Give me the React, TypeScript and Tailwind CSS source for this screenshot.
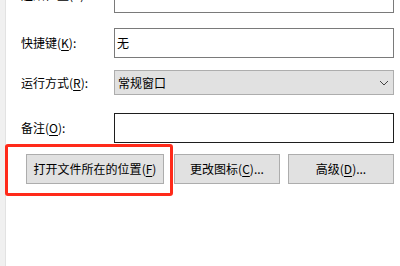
import React from "react";

const Key: React.FC<{ k: string }> = ({ k }) => (
  <>
    (<span className="underline underline-offset-2">{k}</span>)
  </>
);

const rowLabel = "w-[93px] shrink-0 text-[12px] leading-none";

const App: React.FC = () => {
  return (
    <div className="relative flex h-[266px] w-[400px] overflow-hidden bg-white font-['Noto_Sans_CJK_SC','Microsoft_YaHei',sans-serif] text-black">
      {/* left window edge */}
      <div className="h-full w-[6px] shrink-0 border-r border-[#e2e2e2] bg-[#f0f0f0]" />

      <div className="flex flex-1 flex-col pl-[15px]">
        {/* 起始位置 row, mostly cut off at the top */}
        <div className="mt-[-17px] flex items-center">
          <div className={rowLabel + " mb-[6px]"}>起始位置(S):</div>
          <div className="h-[30px] w-[280px] border border-[#7a7a7a] bg-white" />
        </div>

        {/* 快捷键 */}
        <div className="mt-[15px] flex items-center">
          <div className={rowLabel}>
            快捷键<Key k="K" />:
          </div>
          <div className="flex h-[30px] w-[280px] items-center border border-[#7a7a7a] bg-white pl-[2px] text-[12px]">
            无
          </div>
        </div>

        {/* 运行方式 */}
        <div className="mt-[12px] flex items-center">
          <div className={rowLabel}>
            运行方式<Key k="R" />:
          </div>
          <div className="flex h-[25px] w-[280px] items-center justify-between border border-[#adadad] bg-[#e1e1e1] pl-[3px] pr-[4px] text-[12px]">
            <span>常规窗口</span>
            <svg width="10" height="6" viewBox="0 0 10 6" fill="none">
              <path d="M1 1l4 4 4-4" stroke="#444" strokeWidth="1" />
            </svg>
          </div>
        </div>

        {/* 备注 */}
        <div className="mt-[18px] flex items-center">
          <div className={rowLabel}>
            备注<Key k="O" />:
          </div>
          <div className="h-[30px] w-[280px] border border-[#1e1e1e] bg-white" />
        </div>

        {/* buttons */}
        <div className="mt-[11px] flex items-center pl-[5px] text-[12px]">
          <button className="h-[30px] w-[138px] border border-[#adadad] bg-[#e1e1e1]">
            打开文件所在的位置<Key k="F" />
          </button>
          <button className="ml-[10px] h-[30px] w-[106px] border border-[#adadad] bg-[#e1e1e1]">
            更改图标<Key k="C" />...
          </button>
          <button className="ml-[8px] h-[30px] w-[106px] border border-[#adadad] bg-[#e1e1e1]">
            高级<Key k="D" />...
          </button>
        </div>
      </div>

      {/* red annotation box */}
      <div className="pointer-events-none absolute left-[5px] top-[144px] h-[52px] w-[168px] rounded-[3px] border-[3px] border-[#ff2a1a]" />
    </div>
  );
};

export default App;
